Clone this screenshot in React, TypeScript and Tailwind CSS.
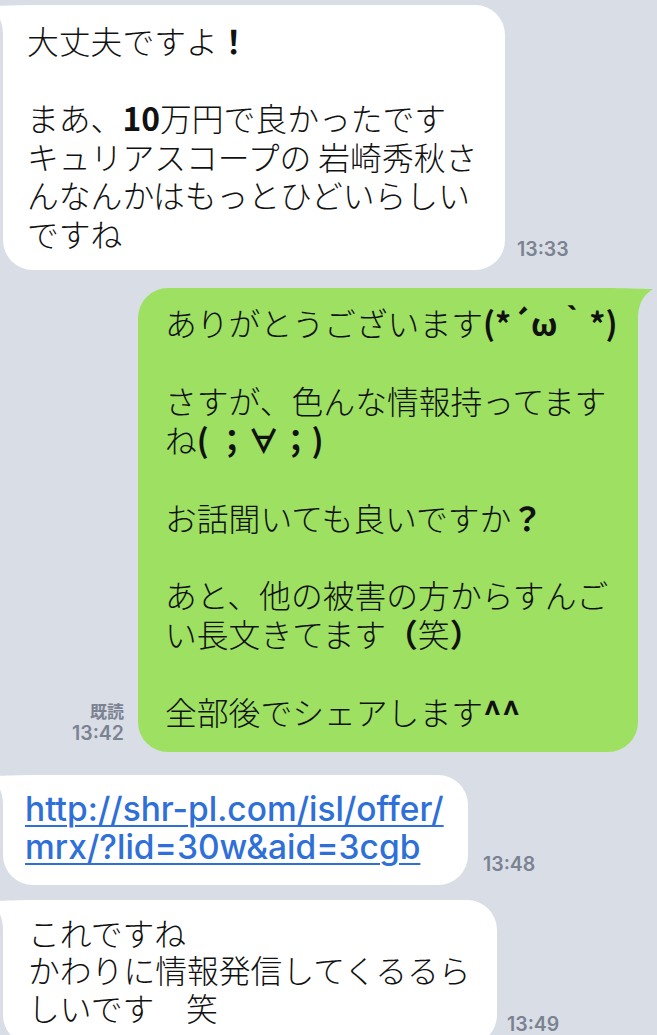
import React from "react";

const jp = "font-['Noto_Sans_CJK_JP',sans-serif]";

function LeftTail() {
  return (
    <svg
      className="absolute left-[-16px] top-0"
      width="50"
      height="30"
      viewBox="-16 0 50 30"
    >
      <path d="M34 0 C14 0 0 1 -15 1 C-7 6 -1 13 0 28 L34 28 Z" fill="#ffffff" />
    </svg>
  );
}

function RightTail() {
  return (
    <svg
      className="absolute right-[-16px] top-0"
      width="50"
      height="30"
      viewBox="-34 0 50 30"
    >
      <path d="M-34 0 C-14 0 0 1 15 1 C7 6 1 13 0 28 L-34 28 Z" fill="#9de062" />
    </svg>
  );
}

function Time({ t }: { t: string }) {
  return (
    <div className="mb-[11px] font-['Inter',sans-serif] text-[19.5px] leading-[19px] font-semibold text-[#7b8393]">
      {t}
    </div>
  );
}

export default function App() {
  return (
    <div className="w-[657px] h-[1035px] overflow-hidden bg-[#d9dee6] flex flex-col pt-[5px] text-[#111111]">
      {/* Row 1 */}
      <div className="flex items-end gap-[12px] pl-[3px]">
        <div
          className={`relative w-[502px] bg-white rounded-[30px] pl-[24px] pt-[16px] pb-[18px] text-[31.8px] leading-[38.5px] font-light whitespace-nowrap ${jp}`}
        >
          <LeftTail />
          <div className="relative">
            <div>
              大丈夫ですよ<span className="font-bold">！</span>
            </div>
            <div>&nbsp;</div>
            <div>
              まあ、<span className="font-bold">10</span>万円で良かったです
            </div>
            <div>キュリアスコープの 岩崎秀秋さ</div>
            <div>んなんかはもっとひどいらしい</div>
            <div>ですね</div>
          </div>
        </div>
        <Time t="13:33" />
      </div>

      {/* Row 2 */}
      <div className="flex items-end justify-end gap-[14px] pr-[19px] mt-[18px]">
        <div className="mb-[8px] flex flex-col items-end text-[#7b8393]">
          <div className={`text-[17px] leading-[23px] font-bold ${jp}`}>既読</div>
          <div className="font-['Inter',sans-serif] text-[19.5px] leading-[22px] font-semibold">
            13:42
          </div>
        </div>
        <div
          className={`relative w-[500px] bg-[#9de062] rounded-[30px] pl-[27px] pt-[15px] pb-[21px] text-[31.8px] leading-[38.9px] font-light whitespace-nowrap ${jp}`}
        >
          <RightTail />
          <div className="relative">
            <div>
              ありがとうございます<span className="font-bold">(*´ω｀*)</span>
            </div>
            <div>&nbsp;</div>
            <div>さすが、色んな情報持ってます</div>
            <div>
              ね<span className="font-bold">( ；∀；)</span>
            </div>
            <div>&nbsp;</div>
            <div>
              お話聞いても良いですか<span className="font-bold">？</span>
            </div>
            <div>&nbsp;</div>
            <div>あと、他の被害の方からすんご</div>
            <div>
              い長文きてます<span className="font-bold">（</span>笑
              <span className="font-bold">）</span>
            </div>
            <div>&nbsp;</div>
            <div>
              全部後でシェアします<span className="font-bold">^^</span>
            </div>
          </div>
        </div>
      </div>

      {/* Row 3 */}
      <div className="flex items-end gap-[15px] pl-[3px] mt-[23px]">
        <div className="relative w-[465px] bg-white rounded-[30px] pl-[22px] pt-[15px] pb-[19px] text-[33.5px] leading-[38px] font-medium whitespace-nowrap font-['Inter',sans-serif] text-[#2f6fd8]">
          <LeftTail />
          <div className="relative underline decoration-[2px] underline-offset-[4px]">
            <div>http://shr-pl.com/isl/offer/</div>
            <div>mrx/?lid=30w&amp;aid=3cgb</div>
          </div>
        </div>
        <Time t="13:48" />
      </div>

      {/* Row 4 */}
      <div className="flex items-end gap-[10px] pl-[3px] mt-[15px]">
        <div
          className={`relative w-[494px] bg-white rounded-[30px] pl-[25px] pt-[14px] pb-[19px] text-[31.8px] leading-[37.5px] font-light whitespace-nowrap ${jp}`}
        >
          <LeftTail />
          <div className="relative">
            <div>これですね</div>
            <div>かわりに情報発信してくるるら</div>
            <div>しいです　笑</div>
          </div>
        </div>
        <Time t="13:49" />
      </div>
    </div>
  );
}
